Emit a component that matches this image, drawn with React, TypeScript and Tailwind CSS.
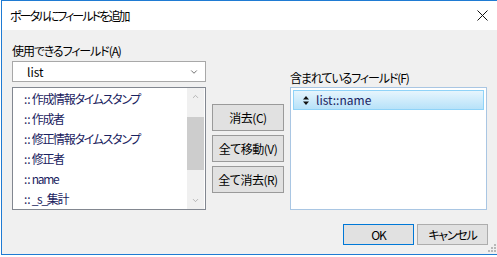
import { ChevronDown, ChevronUp } from "lucide-react"

const font = "[font-family:'Noto_Sans_CJK_JP',sans-serif] [font-feature-settings:'palt'_1]"

const fields = [
  "作成情報タイムスタンプ",
  "作成者",
  "修正情報タイムスタンプ",
  "修正者",
  "name",
  "_s_集計",
]

function DialogButton({ label, primary }: { label: string; primary?: boolean }) {
  return (
    <button
      type="button"
      className={
        "flex h-[21px] w-[71px] items-center justify-center border bg-[#e1e1e1] text-[12px] tracking-[-1.2px] text-black " +
        (primary ? "border-[#0078d7]" : "border-[#adadad]")
      }
    >
      {label}
    </button>
  )
}

function SideButton({ label }: { label: string }) {
  return (
    <button
      type="button"
      className="flex h-[27px] w-[72px] items-center justify-center border border-[#9a9a9a] bg-[#e1e1e1] text-[12px] tracking-[-0.5px] text-black"
    >
      {label}
    </button>
  )
}

function SizeGrip() {
  const dots = [
    [8, 0],
    [8, 3],
    [5, 3],
    [8, 6],
    [5, 6],
    [2, 6],
  ]
  return (
    <svg width="10" height="8" viewBox="0 0 10 8" className="absolute bottom-[2px] right-[1px]">
      {dots.map(([x, y]) => (
        <rect key={`${x}-${y}`} x={x} y={y} width="2" height="2" fill="#b8b8b8" />
      ))}
    </svg>
  )
}

export default function App() {
  return (
    <div className={`h-[257px] w-[497px] bg-white ${font}`}>
      <div className="relative ml-[1px] flex h-[255px] w-[496px] flex-col border-b border-l border-t border-[#1f7bd3] bg-[#f0f0f0]">
        {/* title bar */}
        <div className="flex h-[29px] items-center justify-between bg-white pl-[8px] pr-[8px]">
          <span className="text-[12px] leading-none tracking-[-1.9px] text-black">ポータルにフィールドを追加</span>
          <svg width="11" height="11" viewBox="0 0 11 11" className="mr-[1px]">
            <path d="M0.5 0.5 L10.5 10.5 M10.5 0.5 L0.5 10.5" stroke="#111" strokeWidth="1" />
          </svg>
        </div>

        <div className="flex items-start pl-[10px]">
          {/* available fields */}
          <div className="flex w-[194px] flex-col pt-[13px]">
            <span className="h-[16px] text-[12px] leading-[16px] tracking-[-1.1px] text-black">使用できるフィールド(A)</span>
            <div className="mt-[2px] flex h-[21px] items-center justify-between border border-[#a8a8a8] bg-white pl-[14px] pr-[6px]">
              <span className="text-[12px] text-black">list</span>
              <ChevronDown className="h-[10px] w-[10px] text-[#555]" strokeWidth={2} />
            </div>
            <div className="mt-[5px] flex h-[123px] border border-[#828790] bg-white">
              <ul className="flex-1 pl-[11px] pt-[1px]">
                {fields.map((f) => (
                  <li key={f} className="flex h-[20px] items-center text-[12px] text-[#1a2260]">
                    <span className="mr-[1px]">::</span>
                    <span className="tracking-[-1.3px]">{f}</span>
                  </li>
                ))}
              </ul>
              <div className="flex w-[17px] flex-col bg-[#f0f0f0]">
                <div className="flex h-[17px] items-center justify-center">
                  <ChevronUp className="h-[9px] w-[9px] text-[#a3a3a3]" strokeWidth={2} />
                </div>
                <div className="mt-[12px] h-[53px] bg-[#cdcdcd]" />
                <div className="flex-1" />
                <div className="flex h-[17px] items-center justify-center">
                  <ChevronDown className="h-[9px] w-[9px] text-[#a3a3a3]" strokeWidth={2} />
                </div>
              </div>
              <div className="w-[1px]" />
            </div>
          </div>

          {/* move buttons */}
          <div className="ml-[6px] flex flex-col gap-[4px] pt-[74px]">
            <SideButton label="消去(C)" />
            <SideButton label="全て移動(V)" />
            <SideButton label="全て消去(R)" />
          </div>

          {/* included fields */}
          <div className="ml-[6px] flex w-[197px] flex-col pt-[40px]">
            <span className="h-[16px] text-[12px] leading-[16px] tracking-[-1.1px] text-black">含まれているフィールド(F)</span>
            <div className="mt-[1px] h-[123px] border border-[#a9c6e3] bg-white p-[2px]">
              <div className="flex h-[20px] items-center border border-[#8fd3f8] bg-gradient-to-b from-[#e6f5fd] to-[#b7e2f9] pl-[9px]">
                <svg width="6" height="9" viewBox="0 0 6 9" className="mr-[7px]">
                  <path d="M3 0 L6 3.5 L0 3.5 Z M3 9 L6 5.5 L0 5.5 Z" fill="#111" />
                </svg>
                <span className="text-[12px] text-[#1a2260]">list::name</span>
              </div>
            </div>
          </div>
        </div>

        {/* footer */}
        <div className="mt-[14px] flex justify-end gap-[3px] pr-[9px]">
          <DialogButton label="OK" primary />
          <DialogButton label="キャンセル" />
        </div>

        <SizeGrip />
      </div>
    </div>
  )
}
